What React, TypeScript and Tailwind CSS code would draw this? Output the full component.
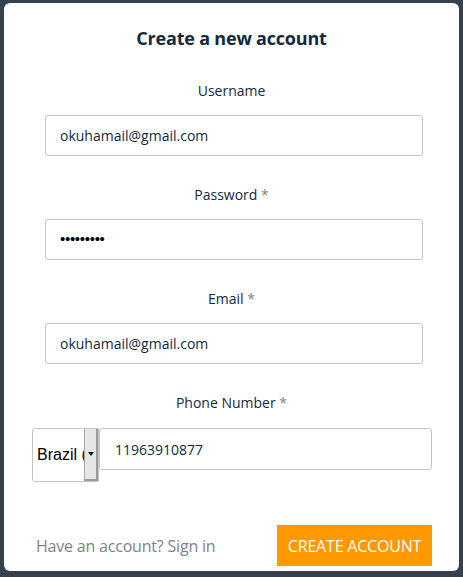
import React from "react";

const font = { fontFamily: '"Open Sans", "Noto Sans", Arial, sans-serif' };

function Field({ label, required, value, type = "text" }: { label: string; required?: boolean; value: string; type?: string }) {
  return (
    <div className="flex flex-col items-center">
      <div className="text-[14px] leading-[20px] text-[#152939] h-[20px]">
        {label}
        {required && <span className="text-[#828282]"> *</span>}
      </div>
      <div className="mt-[14px] self-start ml-[41px] w-[378px] h-[41px] border border-[#c4c4c4] rounded-[3px] flex items-center pl-[14px] text-[14px] text-[#152939]">
        {type === "password" ? (
          <span className="tracking-[-0.3px] text-[15px] text-black" style={{ fontFamily: '"Liberation Sans", Arial, sans-serif' }}>•••••••••</span>
        ) : (
          value
        )}
      </div>
    </div>
  );
}

export default function App() {
  return (
    <div className="w-[463px] h-[577px] bg-[#36414d] pt-[3px] pl-[4px]" style={font}>
      <div className="w-[455px] h-[568px] bg-white rounded-[6px] flex flex-col">
        <h1 className="mt-[23px] text-center text-[18px] leading-[24px] font-bold text-[#152939] tracking-[-0.2px]">Create a new account</h1>
        <div className="mt-[31px] flex flex-col gap-[29px]">
          <Field label="Username" value="okuhamail@gmail.com" />
          <Field label="Password" required value="" type="password" />
          <Field label="Email" required value="okuhamail@gmail.com" />
          <div className="flex flex-col items-center">
            <div className="text-[14px] leading-[20px] text-[#152939] h-[20px]">
              Phone Number<span className="text-[#828282]"> *</span>
            </div>
            <div className="mt-[15px] flex self-start ml-[28px]">
              <div className="w-[67px] h-[54px] border border-[#c4c4c4] rounded-l-[3px] flex bg-white overflow-hidden">
                <div className="w-[52px] flex items-center pl-[4px] text-black overflow-hidden whitespace-nowrap" style={{ fontFamily: '"Liberation Sans", Arial, sans-serif', fontSize: 16 }}>
                  Brazil (+55)
                </div>
                <div className="w-[14px] h-full bg-[#e6e6e6] border-l border-[#aaaaaa] border-r-2 border-b-2 border-r-[#9a9a9a] border-b-[#9a9a9a] flex items-center justify-center">
                  <svg width="6" height="4" viewBox="0 0 6 4"><path d="M0 0H6L3 4Z" fill="#111" /></svg>
                </div>
              </div>
              <div className="w-[333px] h-[42px] border border-[#c4c4c4] rounded-[3px] flex items-center pl-[15px] text-[14px] text-[#152939]">
                11963910877
              </div>
            </div>
          </div>
        </div>
        <div className="mt-auto mb-[5px] flex items-center justify-between pl-[32px] pr-[27px]">
          <span className="text-[16px] text-[#828282] tracking-[-0.2px]">Have an account? Sign in</span>
          <button className="w-[155px] h-[41px] bg-[#ff9900] text-white text-[16px] tracking-[-0.2px]">CREATE ACCOUNT</button>
        </div>
      </div>
    </div>
  );
}
